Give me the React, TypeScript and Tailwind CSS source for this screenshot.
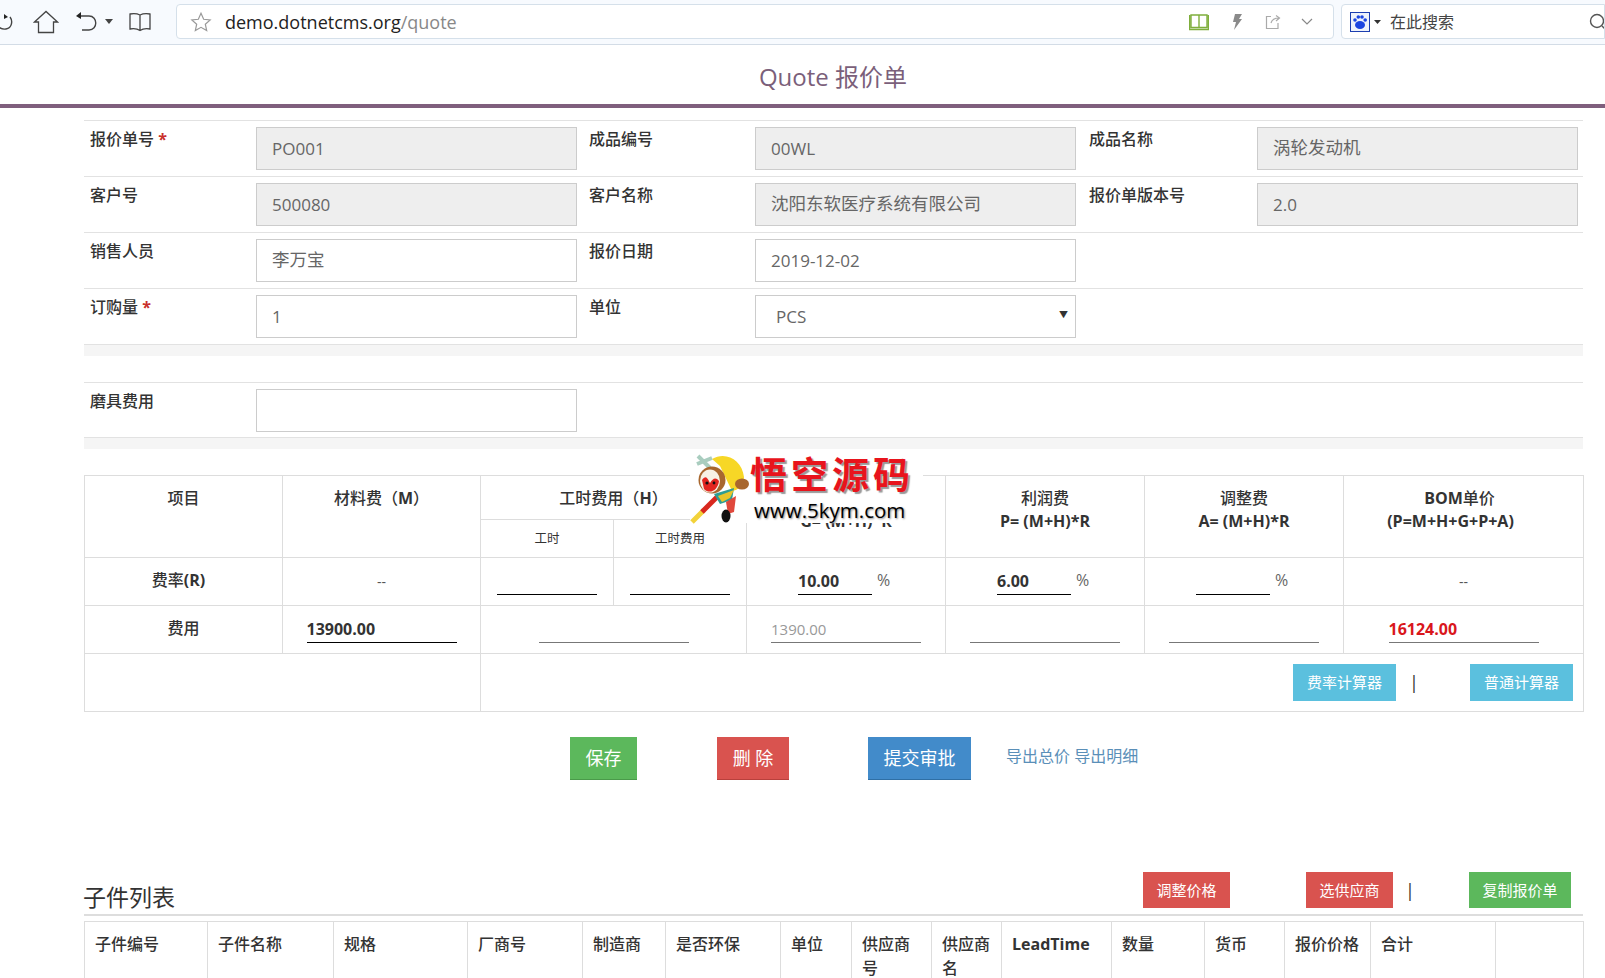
import React from "react";

const font = "font-['Open_Sans','Noto_Sans_CJK_SC',sans-serif]";

function Monkey() {
  return (
    <svg width="64" height="76" viewBox="0 0 64 76" className="shrink-0">
      <path d="M8 6 L20 18 M7 14 L22 8" stroke="#a9cdbf" strokeWidth="4" fill="none" />
      <path d="M2 72 L14 60" stroke="#f2d23a" strokeWidth="5" />
      <path d="M12 62 L28 46" stroke="#d8281f" strokeWidth="5" />
      <path d="M22 9 C36 1 52 10 54 27 C54 36 48 40 42 41 L30 16 Z" fill="#f7d726" />
      <ellipse cx="52" cy="34" rx="7" ry="5.5" fill="#a8672e" />
      <circle cx="22" cy="30" r="13.5" fill="#a8672e" />
      <ellipse cx="20" cy="31" rx="10" ry="11.5" fill="#f7f1e4" />
      <path d="M12 30 C16 24 18 29 20 33 C23 28 26 27 29 31 C28 40 20 45 14 39 Z" fill="#e2261f" />
      <circle cx="17" cy="33" r="1.6" fill="#111" />
      <circle cx="24" cy="33" r="1.4" fill="#111" />
      <path d="M24 44 L44 38 L42 50 L30 54 Z" fill="#2e9d94" />
      <path d="M28 46 L44 40 L40 48 L32 52 Z" fill="#e8c52a" />
      <path d="M36 52 L46 46 L44 62 L38 64 Z" fill="#e0483c" />
      <ellipse cx="36" cy="66" rx="4.5" ry="6.5" fill="#111" />
    </svg>
  );
}

function Field({ value, disabled, cjk }: { value?: string; disabled?: boolean; cjk?: boolean }) {
  return (
    <input
      readOnly
      value={value ?? ""}
      className={`block w-[321px] h-[43px] border border-[#ccc] px-[15px] text-[#666] outline-none ${cjk ? "text-[17.5px] pb-[4px]" : "text-[17px]"} ${disabled ? "bg-[#eee]" : "bg-white"}`}
    />
  );
}

function Label({ text, req }: { text: string; req?: boolean }) {
  return (
    <td className="align-top px-[6px] pt-[6px] text-[16px] leading-[24px] font-medium text-[#333]">
      {text}
      {req && <span className="text-[#c9302c] font-bold"> *</span>}
    </td>
  );
}

function Cell({ value, disabled, cjk }: { value?: string; disabled?: boolean; cjk?: boolean }) {
  return (
    <td className="align-top px-[6px] pt-[6px]">
      <Field value={value} disabled={disabled} cjk={cjk} />
    </td>
  );
}

function Under({ value, cls }: { value?: string; cls: string }) {
  return (
    <input
      readOnly
      value={value ?? ""}
      className={`block h-[28px] border-0 border-b bg-transparent px-0 outline-none ${cls}`}
    />
  );
}

function Rate({ value }: { value?: string }) {
  return (
    <td className="border border-[#ddd] align-top pt-[9px]">
      <div className="flex justify-center items-end">
        <Under value={value} cls="w-[74px] border-black font-bold text-[16px] text-[#333]" />
        <span className="ml-[5px] w-[17px] text-[16px] leading-[24px] text-[#666] mb-[3px]">%</span>
      </div>
    </td>
  );
}

function Fee({ value, cls = "", span }: { value?: string; cls?: string; span?: number }) {
  return (
    <td colSpan={span} className="border border-[#ddd] align-top pt-[9px]">
      <Under value={value} cls={`w-[150px] mx-auto border-[#777] ${cls}`} />
    </td>
  );
}

const thCost = "border border-[#ddd] align-top pt-[11px] text-[16px] leading-[23px] font-medium text-[#333] text-center";

const subCols: [string, number][] = [
  ["子件编号", 123],
  ["子件名称", 126],
  ["规格", 134],
  ["厂商号", 115],
  ["制造商", 83],
  ["是否环保", 115],
  ["单位", 71],
  ["供应商号", 80],
  ["供应商名", 70],
  ["LeadTime", 110],
  ["数量", 93],
  ["货币", 80],
  ["报价价格", 86],
  ["合计", 125],
  ["", 88],
];

export default function App() {
  return (
    <div className={`relative w-[1605px] h-[978px] overflow-hidden bg-white ${font} text-[#333]`}>
      {/* browser chrome */}
      <div className="h-[45px] flex items-start pt-[4px] border-b border-[#d3dce6] bg-[#f7fafe]">
        <div className="w-[176px] shrink-0 h-[35px] flex items-center text-[#444]">
          <svg width="14" height="26" viewBox="0 0 14 26" className="shrink-0" fill="none" stroke="#444" strokeWidth="1.4">
            <path d="M10 8 C13 12 12 19 6 20 C3 20.5 0 19.5 -2 17" />
            <path d="M4 5 L8 8 L4 10 Z" fill="#222" stroke="none" />
          </svg>
          <svg width="26" height="26" viewBox="0 0 26 26" className="ml-[19px] shrink-0" fill="none" stroke="#444" strokeWidth="1.3">
            <path d="M1.5 13 L13 2.5 L24.5 13 H20.5 V23.5 H5.5 V13 Z" />
          </svg>
          <svg width="24" height="24" viewBox="0 0 24 24" className="ml-[16px] shrink-0" fill="none" stroke="#444" strokeWidth="1.4">
            <path d="M4 6 H14 C23 6 23 20 14 20 H7" />
            <path d="M6 2 L1 6 L6 9 Z" fill="#222" stroke="none" />
          </svg>
          <svg width="8" height="5" viewBox="0 0 8 5" className="ml-[6px] shrink-0"><path d="M0 0 H8 L4 5 Z" fill="#444" /></svg>
          <svg width="24" height="22" viewBox="0 0 24 22" className="ml-[15px] shrink-0" fill="none" stroke="#444" strokeWidth="1.3">
            <path d="M12 4 C9 2.5 5 2.5 2 3 V18 C5 17.5 9 17.5 12 19.5 C15 17.5 19 17.5 22 18 V3 C19 2.5 15 2.5 12 4 V19.5" />
          </svg>
        </div>
        <div className="w-[1158px] shrink-0 h-[35px] flex items-center bg-white border border-[#d5e0ea] rounded-[4px]">
          <svg width="22" height="22" viewBox="0 0 24 24" className="ml-[13px] shrink-0" fill="none" stroke="#999" strokeWidth="1.3">
            <path d="M12 2.5 L14.9 9 L22 9.7 L16.7 14.4 L18.2 21.4 L12 17.8 L5.8 21.4 L7.3 14.4 L2 9.7 L9.1 9 Z" />
          </svg>
          <div className="ml-[13px] flex-1 text-[18px] leading-[24px] text-[#222] whitespace-nowrap">
            demo.dotnetcms.org<span className="text-[#888]">/quote</span>
          </div>
          <svg width="20" height="18" viewBox="0 0 20 18" className="shrink-0" fill="none" stroke="#7fae3c" strokeWidth="1.4">
            <path d="M2 2 H10 V14.5 H2 Z M10 2 H18 V14.5 H10 M0.5 2 V16.5 H19.5 V2" />
          </svg>
          <svg width="14" height="18" viewBox="0 0 14 18" className="ml-[21px] shrink-0"><path d="M5 1 H12 L9 6 H12 L4 17 L6 9 H3 Z" fill="#8a8a8a" /></svg>
          <svg width="16" height="16" viewBox="0 0 16 16" className="ml-[21px] shrink-0" fill="none" stroke="#aaa" strokeWidth="1.2">
            <path d="M6 2.5 H1.5 V14.5 H13 V9 M6 9 C7 5.5 10 4 14 4 M11 1.5 L14.5 4 L11 7" />
          </svg>
          <svg width="12" height="7" viewBox="0 0 12 7" className="ml-[20px] mr-[20px] shrink-0" fill="none" stroke="#888" strokeWidth="1.2">
            <path d="M1 1 L6 6 L11 1" />
          </svg>
        </div>
        <div className="ml-[7px] flex-1 h-[35px] flex items-center bg-white border border-[#d5e0ea] rounded-l-[4px] overflow-hidden">
          <svg width="20" height="20" viewBox="0 0 20 20" className="ml-[8px] shrink-0">
            <rect x="0.5" y="0.5" width="19" height="19" fill="#eef3fb" stroke="#1c3fb0" />
            <ellipse cx="10" cy="13" rx="5" ry="4" fill="#1b45e0" />
            <circle cx="5" cy="8" r="1.8" fill="#1b45e0" />
            <circle cx="8.3" cy="5" r="1.8" fill="#1b45e0" />
            <circle cx="12" cy="5" r="1.8" fill="#1b45e0" />
            <circle cx="15.2" cy="8" r="1.8" fill="#1b45e0" />
          </svg>
          <svg width="7" height="4" viewBox="0 0 7 4" className="ml-[4px] shrink-0"><path d="M0 0 H7 L3.5 4 Z" fill="#333" /></svg>
          <span className="ml-[9px] text-[16px] text-[#444] whitespace-nowrap">在此搜索</span>
          <svg width="18" height="18" viewBox="0 0 18 18" className="ml-[135px] shrink-0" fill="none" stroke="#555" strokeWidth="1.4">
            <circle cx="8" cy="8" r="6.5" /><path d="M13 13 L17 17" />
          </svg>
        </div>
      </div>

      {/* title */}
      <h1 className="h-[59px] flex items-center justify-center pl-[61px] pt-[4px] text-[24px] font-normal text-[#7b5f7a]">
        Quote 报价单
      </h1>
      <div className="h-[4px] bg-[#7f5f7d]" />

      <div className="ml-[84px] w-[1499px]">
        {/* form */}
        <table className="mt-[12px] w-[1499px] table-fixed border-collapse">
          <colgroup>
            <col className="w-[166px]" />
            <col className="w-[333px]" />
            <col className="w-[166px]" />
            <col className="w-[334px]" />
            <col className="w-[168px]" />
            <col className="w-[332px]" />
          </colgroup>
          <tbody>
            <tr className="h-[56px] border-t border-[#e2e2e2]">
              <Label text="报价单号" req />
              <Cell value="PO001" disabled />
              <Label text="成品编号" />
              <Cell value="00WL" disabled />
              <Label text="成品名称" />
              <Cell value="涡轮发动机" disabled cjk />
            </tr>
            <tr className="h-[56px] border-t border-[#e2e2e2]">
              <Label text="客户号" />
              <Cell value="500080" disabled />
              <Label text="客户名称" />
              <Cell value="沈阳东软医疗系统有限公司" disabled cjk />
              <Label text="报价单版本号" />
              <Cell value="2.0" disabled />
            </tr>
            <tr className="h-[56px] border-t border-[#e2e2e2]">
              <Label text="销售人员" />
              <Cell value="李万宝" cjk />
              <Label text="报价日期" />
              <Cell value="2019-12-02" />
              <td colSpan={2} />
            </tr>
            <tr className="h-[56px] border-t border-[#e2e2e2]">
              <Label text="订购量" req />
              <Cell value="1" />
              <Label text="单位" />
              <td className="align-top px-[6px] pt-[6px]">
                <div className="relative w-[321px]">
                  <select className="block appearance-none w-[321px] h-[43px] border border-[#ccc] bg-white pl-[20px] text-[17px] text-[#666] outline-none">
                    <option>PCS</option>
                  </select>
                  <span className="absolute right-[8px] top-[13px] text-[9px] leading-[14px] text-[#333]">▼</span>
                </div>
              </td>
              <td colSpan={2} />
            </tr>
          </tbody>
        </table>
        <div className="-mt-[1px] h-[12px] bg-[#f5f5f5] border-t border-[#e2e2e2]" />
        <table className="mt-[26px] w-[1499px] table-fixed border-collapse">
          <colgroup>
            <col className="w-[166px]" />
            <col className="w-[333px]" />
            <col />
          </colgroup>
          <tbody>
            <tr className="h-[56px] border-t border-[#e2e2e2]">
              <Label text="磨具费用" />
              <Cell />
              <td />
            </tr>
          </tbody>
        </table>
        <div className="-mt-[1px] h-[12px] bg-[#f5f5f5] border-t border-[#e2e2e2]" />

        {/* cost table */}
        <table className="mt-[26px] w-[1499px] table-fixed border-collapse">
          <colgroup>
            <col className="w-[198px]" />
            <col className="w-[198px]" />
            <col className="w-[133px]" />
            <col className="w-[133px]" />
            <col className="w-[199px]" />
            <col className="w-[199px]" />
            <col className="w-[199px]" />
            <col className="w-[240px]" />
          </colgroup>
          <tbody>
            <tr className="h-[44px]">
              <th rowSpan={2} className={thCost}>项目</th>
              <th rowSpan={2} className={thCost}>材料费（<b>M</b>）</th>
              <th colSpan={2} className={thCost}>工时费用（<b>H</b>）</th>
              <th rowSpan={2} className={thCost}>管理费<br /><b>G= (M+H)*R</b></th>
              <th rowSpan={2} className={thCost}>利润费<br /><b>P= (M+H)*R</b></th>
              <th rowSpan={2} className={thCost}>调整费<br /><b>A= (M+H)*R</b></th>
              <th rowSpan={2} className={thCost}>
                <div className="pr-[8px]"><b>BOM</b>单价</div>
                <div className="pr-[26px]"><b>(P=M+H+G+P+A)</b></div>
              </th>
            </tr>
            <tr className="h-[38px]">
              <th className="border border-[#ddd] pt-[1px] text-[12.5px] font-normal text-center text-[#333]">工时</th>
              <th className="border border-[#ddd] pt-[1px] text-[12.5px] font-normal text-center text-[#333]">工时费用</th>
            </tr>
            <tr className="h-[48px]">
              <th className="border border-[#ddd] pr-[10px] pb-[3px] text-[16px] font-medium text-[#333] text-center">费率<b>(R)</b></th>
              <td className="border border-[#ddd] text-center text-[14px] text-[#555]">--</td>
              <td className="border border-[#ddd] align-top pt-[9px]"><Under cls="w-[100px] mx-auto border-black" /></td>
              <td className="border border-[#ddd] align-top pt-[9px]"><Under cls="w-[100px] mx-auto border-black" /></td>
              <Rate value="10.00" />
              <Rate value="6.00" />
              <Rate />
              <td className="border border-[#ddd] text-center text-[14px] text-[#555]">--</td>
            </tr>
            <tr className="h-[48px]">
              <th className="border border-[#ddd] pb-[3px] text-[16px] font-medium text-[#333] text-center">费用</th>
              <Fee value="13900.00" cls="!border-black font-bold text-[16px] text-[#333]" />
              <Fee span={2} />
              <Fee value="1390.00" cls="text-[15px] text-[#999]" />
              <Fee />
              <Fee />
              <Fee value="16124.00" cls="font-bold text-[16px] text-[#d9161c]" />
            </tr>
            <tr className="h-[58px]">
              <td colSpan={2} className="border border-[#ddd]" />
              <td colSpan={6} className="border border-[#ddd] align-top">
                <div className="flex justify-end items-center pt-[10px] pr-[10px]">
                  <button className="w-[103px] h-[37px] bg-[#5bc0de] text-white text-[15px]">费率计算器</button>
                  <span className="ml-[13px] mr-[58px] w-[3px] text-[18px] text-[#333]">|</span>
                  <button className="w-[103px] h-[37px] bg-[#5bc0de] text-white text-[15px]">普通计算器</button>
                </div>
              </td>
            </tr>
          </tbody>
        </table>

        {/* actions */}
        <div className="mt-[25px] ml-[486px] flex items-start">
          <button className="w-[67px] h-[43px] bg-[#5cb85c] text-white text-[18px] border-b border-[#4a9a4a]">保存</button>
          <button className="ml-[80px] w-[72px] h-[43px] bg-[#d9534f] text-white text-[18px] border-b border-[#b8403c]">删 除</button>
          <button className="ml-[79px] w-[103px] h-[43px] bg-[#428bca] text-white text-[18px] border-b border-[#2f6fa5]">提交审批</button>
          <span className="ml-[35px] mt-[8px] text-[16px] leading-[22px] text-[#5a8fb8] whitespace-nowrap">导出总价 导出明细</span>
        </div>

        {/* sub parts */}
        <div className="mt-[93px] h-[43px] flex items-end border-b-2 border-[#ddd]">
          <h2 className="-ml-[1px] mb-[-1px] text-[23px] leading-[36px] font-normal text-[#333]">子件列表</h2>
          <div className="ml-auto mb-[6px] flex items-center pr-[12px]">
            <button className="w-[87px] h-[36px] bg-[#d9534f] text-white text-[15px]">调整价格</button>
            <button className="ml-[76px] w-[87px] h-[36px] bg-[#d9534f] text-white text-[15px]">选供应商</button>
            <span className="ml-[12px] mr-[61px] w-[3px] text-[18px] text-[#333]">|</span>
            <button className="w-[102px] h-[36px] bg-[#5cb85c] text-white text-[15px]">复制报价单</button>
          </div>
        </div>
        <table className="mt-[5px] w-[1499px] table-fixed border-collapse">
          <colgroup>
            {subCols.map(([n, w], i) => (
              <col key={i} style={{ width: w }} />
            ))}
          </colgroup>
          <thead>
            <tr>
              {subCols.map(([n], i) => (
                <th
                  key={i}
                  className="h-[80px] border border-[#ddd] align-top pl-[10px] pr-[8px] pt-[10px] text-left text-[16px] leading-[24px] font-medium text-[#333]"
                >
                  {n === "LeadTime" ? <b>{n}</b> : n}
                </th>
              ))}
            </tr>
          </thead>
        </table>
      </div>

      {/* watermark */}
      <div className="absolute left-[690px] top-[450px] w-[233px] h-[73px] bg-white flex items-start">
        <Monkey />
        <div className="flex flex-col ml-[-4px]">
          <div className="h-[49px] flex items-center text-[37px] leading-[49px] tracking-[4px] font-bold text-[#e8141c] whitespace-nowrap [text-shadow:2px_2px_1px_#999]">
            悟空源码
          </div>
          <div className="ml-[4px] font-['Open_Sans',sans-serif] text-[20.5px] leading-[22px] text-black whitespace-nowrap [text-shadow:1px_1px_2px_#888]">
            www.5kym.com
          </div>
        </div>
      </div>
    </div>
  );
}
